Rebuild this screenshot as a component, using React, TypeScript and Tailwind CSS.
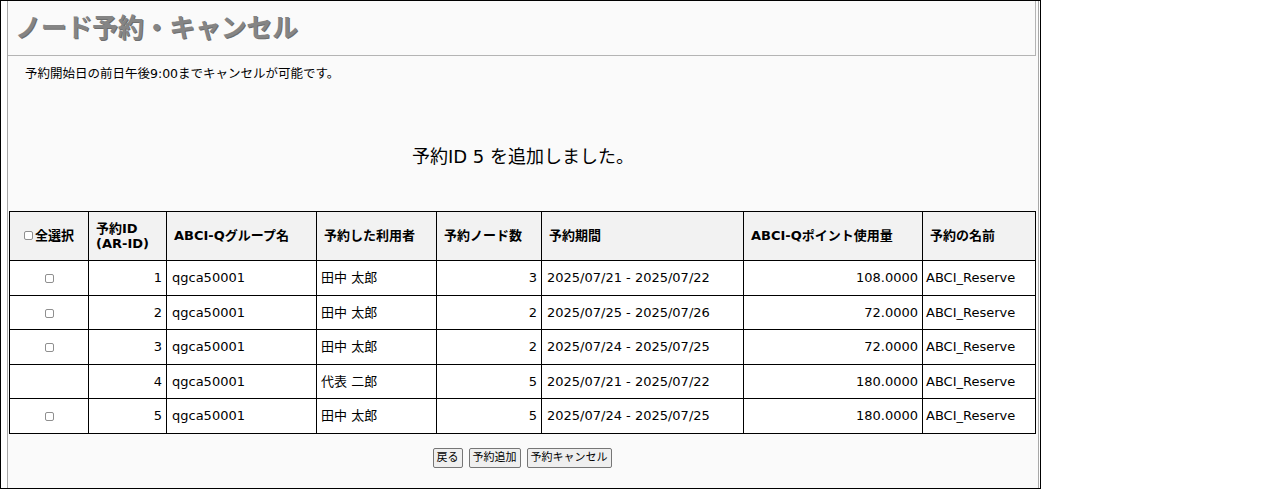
const font = "font-['DejaVu_Sans','Noto_Sans_CJK_JP',sans-serif]"

const rows = [
  { id: 1, check: true, user: '田中 太郎', nodes: 3, period: '2025/07/21 - 2025/07/22', points: '108.0000' },
  { id: 2, check: true, user: '田中 太郎', nodes: 2, period: '2025/07/25 - 2025/07/26', points: '72.0000' },
  { id: 3, check: true, user: '田中 太郎', nodes: 2, period: '2025/07/24 - 2025/07/25', points: '72.0000' },
  { id: 4, check: false, user: '代表 二郎', nodes: 5, period: '2025/07/21 - 2025/07/22', points: '180.0000' },
  { id: 5, check: true, user: '田中 太郎', nodes: 5, period: '2025/07/24 - 2025/07/25', points: '180.0000' },
]

function Box() {
  return <span className="inline-block w-[9px] h-[9px] border border-[#8f8f8f] rounded-[2px] bg-white align-middle" />
}

export default function App() {
  return (
    <div className={`w-[1041px] h-[489px] border border-black bg-white text-black ${font}`}>
      <div className="h-full ml-[6px] mr-[1px] border-l border-r border-[#a8a8a8] bg-[#fafafa] flex flex-col">
        {/* Title */}
        <div className="h-[55px] mr-[2px] border-r border-b border-[#b4b4b4] flex items-center pl-[7px]">
          <h1 className="text-[26px] font-bold text-[#858585] [text-shadow:1px_1px_0_#6e6e6e] tracking-[-0.3px]">
            ノード予約・キャンセル
          </h1>
        </div>

        <p className="text-[12.5px] pl-[17px] mt-[10px] leading-[16px]">予約開始日の前日午後9:00までキャンセルが可能です。</p>

        <p className="text-[18px] text-center mt-[63px] leading-[24px]">予約ID 5 を追加しました。</p>

        {/* Reservations */}
        <table className="ml-[1px] mt-[42px] w-[1027px] table-fixed border-collapse text-[13px]">
          <colgroup>
            <col className="w-[79px]" />
            <col className="w-[78px]" />
            <col className="w-[150px]" />
            <col className="w-[120px]" />
            <col className="w-[105px]" />
            <col className="w-[202px]" />
            <col className="w-[179px]" />
            <col className="w-[113px]" />
          </colgroup>
          <thead>
            <tr className="h-[49px] bg-[#f2f2f2] font-bold text-left">
              <th className="border border-black text-center font-bold">
                <span className="inline-flex items-center gap-[2px]"><Box />全選択</span>
              </th>
              <th className="border border-black px-[7px] font-bold text-left leading-[15px]">予約ID<br />(AR-ID)</th>
              <th className="border border-black px-[7px] font-bold text-left">ABCI-Qグループ名</th>
              <th className="border border-black px-[7px] font-bold text-left">予約した利用者</th>
              <th className="border border-black px-[7px] font-bold text-left">予約ノード数</th>
              <th className="border border-black px-[7px] font-bold text-left">予約期間</th>
              <th className="border border-black px-[7px] font-bold text-left">ABCI-Qポイント使用量</th>
              <th className="border border-black px-[7px] font-bold text-left">予約の名前</th>
            </tr>
          </thead>
          <tbody>
            {rows.map((r) => (
              <tr key={r.id} className="h-[34.5px] bg-white">
                <td className="border border-black text-center">{r.check && <Box />}</td>
                <td className="border border-black text-right px-[4px]">{r.id}</td>
                <td className="border border-black px-[5px]">qgca50001</td>
                <td className="border border-black px-[4px]">{r.user}</td>
                <td className="border border-black text-right px-[4px]">{r.nodes}</td>
                <td className="border border-black px-[5px]">{r.period}</td>
                <td className="border border-black text-right px-[4px]">{r.points}</td>
                <td className="border border-black px-[3px]">ABCI_Reserve</td>
              </tr>
            ))}
          </tbody>
        </table>

        <div className="flex justify-center gap-[6px] mt-[14px] pr-[2px]">
          {['戻る', '予約追加', '予約キャンセル'].map((b) => (
            <button key={b} className="h-[20px] px-[3px] text-[11px] leading-none border border-[#767676] rounded-[2px] bg-[#efefef]">
              {b}
            </button>
          ))}
        </div>
      </div>
    </div>
  )
}
